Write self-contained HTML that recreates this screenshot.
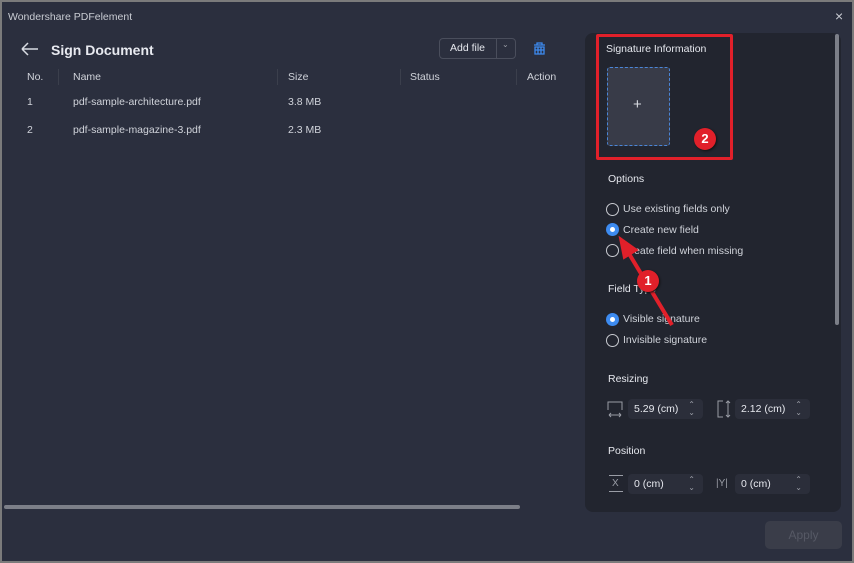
<!DOCTYPE html>
<html><head><meta charset="utf-8"><style>
*{margin:0;padding:0;box-sizing:border-box}
body{width:854px;height:563px;overflow:hidden;background:#7b7b7b;font-family:"Liberation Sans",sans-serif;color:#e6e8ee;position:relative}
.win{position:absolute;left:2px;top:2px;width:850px;height:559px;background:#2b2f3e}
.a{position:absolute;white-space:nowrap}
.t{font-size:10.5px;color:#d0d3da}
.panel{position:absolute;left:585px;top:33px;width:256px;height:479px;background:#22252f;border-radius:8px}
.radio{position:absolute;width:13px;height:13px;border-radius:50%;border:1px solid #c8cad0}
.radio.on{border:none;background:#3d8bf0}
.radio.on::after{content:"";position:absolute;left:4px;top:4px;width:5px;height:5px;border-radius:50%;background:#fff}
.inp{position:absolute;width:75px;height:20px;background:#2b2e3a;border-radius:4px;font-size:10.5px;padding:4px 0 0 6px;color:#e6e8ee}
.inp span{position:absolute;right:8px;top:2px;font-size:8px;line-height:8px;color:#9a9da6}
.badge{position:absolute;width:22px;height:22px;border-radius:50%;background:#e1202a;color:#fff;font-weight:bold;font-size:13px;text-align:center;line-height:22px;box-shadow:1px 1px 2px #111}
</style></head><body>
<div class="win"></div>
<div class="a" style="left:8px;top:11px;font-size:10.5px;color:#c9ccd3">Wondershare PDFelement</div>
<div class="a" style="left:835px;top:8px;font-size:14px;color:#c9ccd3">×</div>
<svg class="a" style="left:21px;top:42px" width="18" height="14"><path d="M1 7H17M1 7L7 1M1 7L7 13" stroke="#d8dbe2" stroke-width="1.5" fill="none"/></svg>
<div class="a" style="left:51px;top:42px;font-size:14px;font-weight:bold;color:#e8eaf0">Sign Document</div>
<div class="a" style="left:439px;top:38px;width:77px;height:21px;border:1px solid #4a4e5c;border-radius:4px"></div>
<div class="a" style="left:496px;top:38px;width:1px;height:21px;background:#4a4e5c"></div>
<div class="a" style="left:450px;top:42px;font-size:10.5px;color:#e6e8ee">Add file</div>
<div class="a" style="left:502px;top:40px;font-size:8px;color:#9a9da6">⌄</div>
<svg class="a" style="left:533px;top:42px" width="13" height="13"><path d="M1 3H12M4 3V1H9V3M2 5H11V12H2ZM2 8H11M5 5V12M8 5V12" stroke="#3d8bf0" stroke-width="1.3" fill="none"/></svg>
<div class="a t" style="left:27px;top:71px">No.</div>
<div class="a" style="left:58px;top:69px;width:1px;height:16px;background:#3b3f4c"></div>
<div class="a t" style="left:73px;top:71px">Name</div>
<div class="a" style="left:277px;top:69px;width:1px;height:16px;background:#3b3f4c"></div>
<div class="a t" style="left:288px;top:71px">Size</div>
<div class="a" style="left:400px;top:69px;width:1px;height:16px;background:#3b3f4c"></div>
<div class="a t" style="left:410px;top:71px">Status</div>
<div class="a" style="left:516px;top:69px;width:1px;height:16px;background:#3b3f4c"></div>
<div class="a t" style="left:527px;top:71px">Action</div>
<div class="a t" style="left:27px;top:96px">1</div>
<div class="a t" style="left:73px;top:96px">pdf-sample-architecture.pdf</div>
<div class="a t" style="left:288px;top:96px">3.8 MB</div>
<div class="a t" style="left:27px;top:124px">2</div>
<div class="a t" style="left:73px;top:124px">pdf-sample-magazine-3.pdf</div>
<div class="a t" style="left:288px;top:124px">2.3 MB</div>
<div class="a" style="left:4px;top:505px;width:516px;height:4px;border-radius:2px;background:#7c7f88"></div>

<div class="panel"></div>
<div class="a" style="left:835px;top:34px;width:4px;height:291px;border-radius:2px;background:#7c7f88"></div>
<div class="a" style="left:596px;top:34px;width:137px;height:126px;border:3px solid #e1202a;border-radius:2px"></div>
<div class="a t" style="left:606px;top:43px;color:#e6e8ee">Signature Information</div>
<div class="a" style="left:607px;top:67px;width:63px;height:79px;border:1px dashed #4a86d8;border-radius:3px;background:#383b48"></div>
<div class="a" style="left:633px;top:96px;font-size:15px;color:#d8dbe2">+</div>
<div class="badge" style="left:694px;top:128px">2</div>
<div class="a t" style="left:608px;top:173px;color:#e6e8ee">Options</div>
<div class="radio" style="left:606px;top:203px"></div><div class="a t" style="left:623px;top:203px">Use existing fields only</div>
<div class="radio on" style="left:606px;top:223px"></div><div class="a t" style="left:623px;top:224px">Create new field</div>
<div class="radio" style="left:606px;top:244px"></div><div class="a t" style="left:623px;top:245px">Create field when missing</div>
<div class="a t" style="left:608px;top:283px;color:#e6e8ee">Field Type</div>
<div class="radio on" style="left:606px;top:313px"></div><div class="a t" style="left:623px;top:313px">Visible signature</div>
<div class="radio" style="left:606px;top:334px"></div><div class="a t" style="left:623px;top:334px">Invisible signature</div>
<div class="a t" style="left:608px;top:373px;color:#e6e8ee">Resizing</div>
<svg class="a" style="left:607px;top:400px" width="16" height="18"><path d="M1 10V2H15V10M2 15H14M2 15L4 13M2 15L4 17M14 15L12 13M14 15L12 17" stroke="#9a9da6" fill="none"/></svg>
<div class="inp" style="left:628px;top:399px">5.29 (cm)<span>⌃<br>⌄</span></div>
<svg class="a" style="left:716px;top:399px" width="18" height="20"><path d="M7 2H2V18H7M12 2V18M10 4L12 2L14 4M10 16L12 18L14 16" stroke="#9a9da6" fill="none"/></svg>
<div class="inp" style="left:735px;top:399px">2.12 (cm)<span>⌃<br>⌄</span></div>
<div class="a t" style="left:608px;top:445px;color:#e6e8ee">Position</div>
<div class="a" style="left:609px;top:475px;width:14px;height:1px;background:#9a9da6"></div>
<div class="a" style="left:612px;top:478px;font-size:10px;color:#9a9da6">X</div>
<div class="a" style="left:609px;top:491px;width:14px;height:1px;background:#9a9da6"></div>
<div class="inp" style="left:628px;top:474px">0 (cm)<span>⌃<br>⌄</span></div>
<div class="a" style="left:716px;top:478px;font-size:10px;color:#9a9da6">|Y|</div>
<div class="inp" style="left:735px;top:474px">0 (cm)<span>⌃<br>⌄</span></div>
<div class="a" style="left:765px;top:521px;width:77px;height:28px;border-radius:5px;background:#3a3d49;color:#565965;font-size:12px;text-align:center;line-height:28px">Apply</div>
<svg class="a" style="left:0;top:0" width="854" height="563"><path d="M672 325L628 252" stroke="#e1202a" stroke-width="4"/><path d="M620 238L637 250L624 258Z" fill="#e1202a" stroke="#e1202a" stroke-width="2"/></svg>
<div class="badge" style="left:637px;top:270px">1</div>
</body></html>
